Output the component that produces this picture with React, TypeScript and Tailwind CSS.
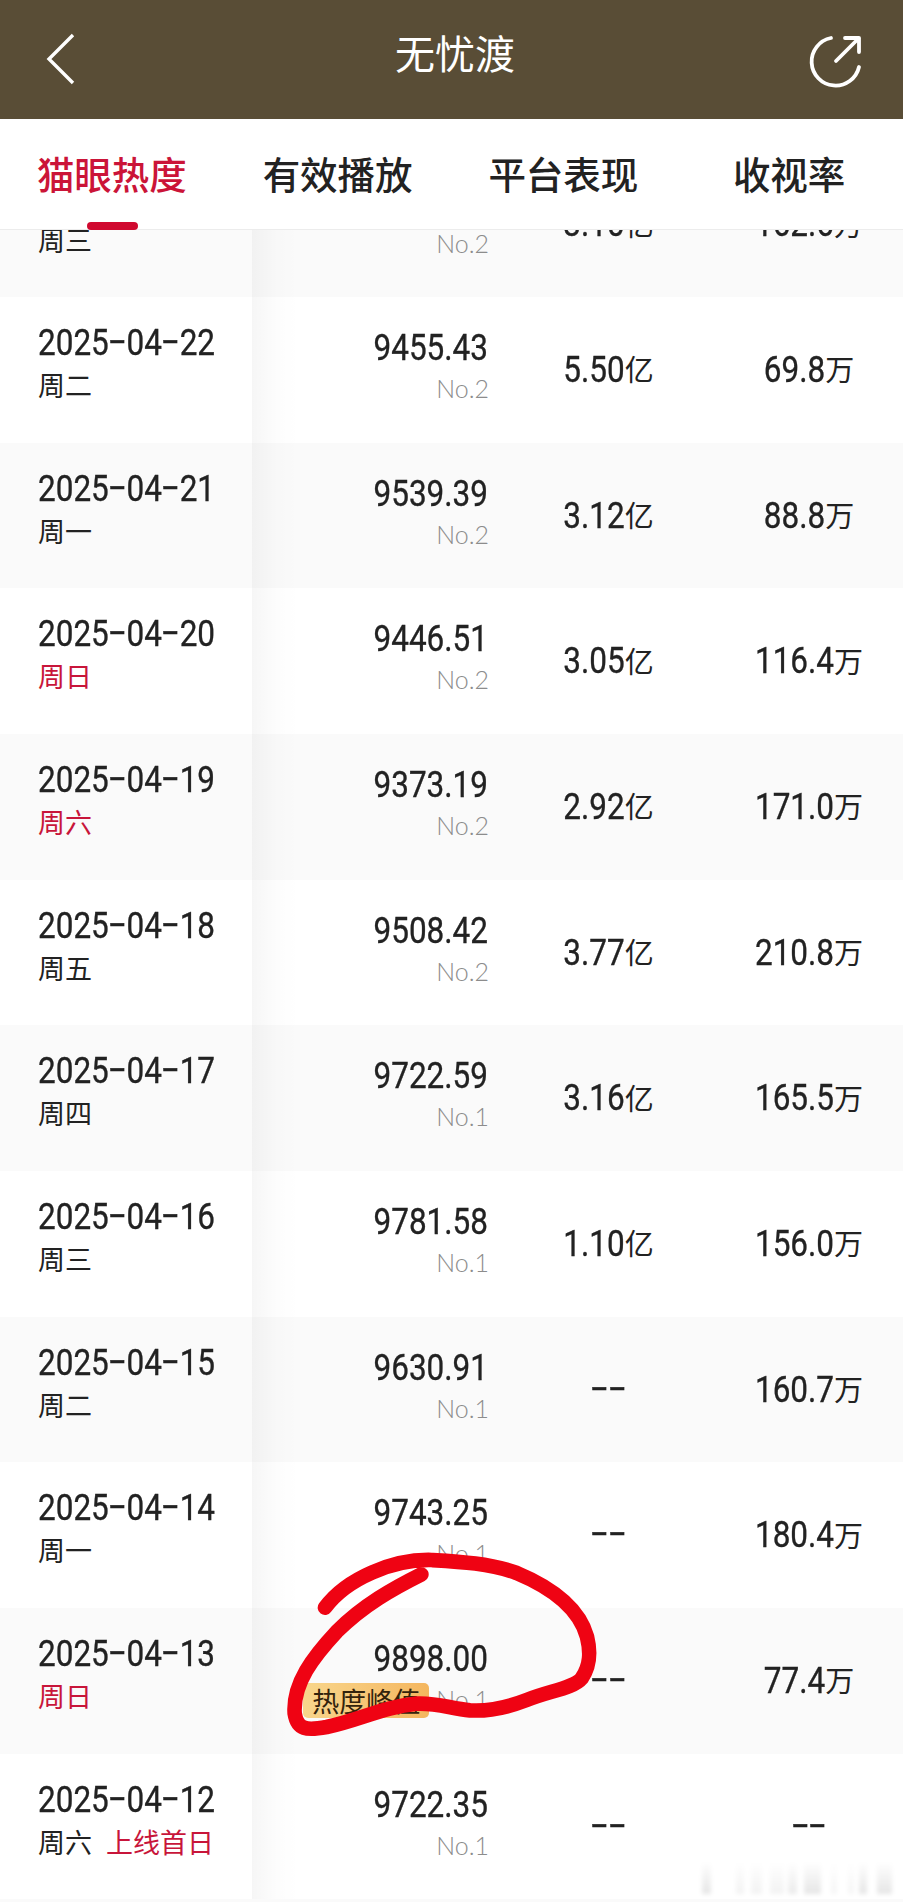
type Row = {
  date: string;
  day: string;
  red?: boolean;
  heat: string;
  rank: string;
  plays: string;
  avg: string;
  note?: string;
  peak?: boolean;
};

const rows: Row[] = [
  { date: "2025-04-23", day: "周三", heat: "9402.16", rank: "No.2", plays: "3.10亿", avg: "162.6万" },
  { date: "2025-04-22", day: "周二", heat: "9455.43", rank: "No.2", plays: "5.50亿", avg: "69.8万" },
  { date: "2025-04-21", day: "周一", heat: "9539.39", rank: "No.2", plays: "3.12亿", avg: "88.8万" },
  { date: "2025-04-20", day: "周日", red: true, heat: "9446.51", rank: "No.2", plays: "3.05亿", avg: "116.4万" },
  { date: "2025-04-19", day: "周六", red: true, heat: "9373.19", rank: "No.2", plays: "2.92亿", avg: "171.0万" },
  { date: "2025-04-18", day: "周五", heat: "9508.42", rank: "No.2", plays: "3.77亿", avg: "210.8万" },
  { date: "2025-04-17", day: "周四", heat: "9722.59", rank: "No.1", plays: "3.16亿", avg: "165.5万" },
  { date: "2025-04-16", day: "周三", heat: "9781.58", rank: "No.1", plays: "1.10亿", avg: "156.0万" },
  { date: "2025-04-15", day: "周二", heat: "9630.91", rank: "No.1", plays: "--", avg: "160.7万" },
  { date: "2025-04-14", day: "周一", heat: "9743.25", rank: "No.1", plays: "--", avg: "180.4万" },
  { date: "2025-04-13", day: "周日", red: true, heat: "9898.00", rank: "No.1", plays: "--", avg: "77.4万", peak: true },
  { date: "2025-04-12", day: "周六", heat: "9722.35", rank: "No.1", plays: "--", avg: "--", note: "上线首日" },
];

const tabs = ["猫眼热度", "有效播放", "平台表现", "收视率"];

/* Tall, narrow figures; hyphens are widened to a full digit cell. */
function Figures({ text }: { text: string }) {
  return (
    <span className="inline-block scale-y-[1.16] font-['Roboto','Noto_Sans_CJK_SC',sans-serif] text-[31.5px] leading-[36px] whitespace-nowrap [-webkit-text-stroke:0.3px]">
      {text.split(/(-)/).map((part, i) =>
        part === "-" ? (
          <span key={i} className="inline-flex w-[17.7px] justify-center">
            <span className="inline-block -translate-y-px scale-x-[1.8]">-</span>
          </span>
        ) : (
          part
        ),
      )}
    </span>
  );
}

function Amount({ text }: { text: string }) {
  const unit = /[亿万]$/.test(text) ? text.slice(-1) : "";
  return (
    <div className="flex items-center justify-center">
      <Figures text={unit ? text.slice(0, -1) : text} />
      {unit && <span className="mb-[3px] text-[29px] leading-[36px]">{unit}</span>}
    </div>
  );
}

function DataRow({ row, striped }: { row: Row; striped: boolean }) {
  return (
    <div className={`flex h-[145.67px] shrink-0 ${striped ? "bg-[#fafafa]" : "bg-white"}`}>
      <div className="flex w-[252px] flex-col pt-[28px] pl-[38px]">
        <Figures text={row.date} />
        <div className="mt-[6px] flex gap-[14px] text-[27px] leading-[36px] whitespace-nowrap">
          <span className={row.red ? "text-[#c8153a]" : ""}>{row.day}</span>
          {row.note && <span className="text-[#c8153a]">{row.note}</span>}
        </div>
      </div>
      <div className="flex w-[236px] flex-col items-end bg-linear-to-r from-black/[0.035] via-black/[0.01] via-10% to-transparent to-20% pt-[33px]">
        <Figures text={row.heat} />
        <div className="mt-[5px] -mr-px flex items-center">
          {row.peak && (
            <span className="mt-px -mb-px mr-[7px] flex h-[35px] w-[126px] items-center justify-center rounded-[5px] bg-linear-to-r from-[#f8d68c] to-[#f4b65e] text-[27px] leading-[35px] text-[#33230c]">
              热度峰值
            </span>
          )}
          <span className="font-['Lato',sans-serif] text-[25px] leading-[35px] font-light text-[#8c8c8c]">{row.rank}</span>
        </div>
      </div>
      <div className="flex w-[241px] items-center justify-center">
        <Amount text={row.plays} />
      </div>
      <div className="flex w-[160px] items-center justify-center">
        <Amount text={row.avg} />
      </div>
    </div>
  );
}

/* Faded smudges in the bottom corner: [x, width, opacity] */
const smudges = [
  [22, 9, 0.1],
  [56, 8, 0.05],
  [71, 11, 0.05],
  [90, 14, 0.05],
  [108, 9, 0.08],
  [124, 17, 0.1],
  [151, 6, 0.04],
  [168, 6, 0.04],
  [179, 8, 0.1],
  [197, 15, 0.1],
];

export default function App() {
  return (
    <div className="relative flex h-[1902px] w-[903px] flex-col overflow-hidden bg-white font-['Noto_Sans_CJK_SC',sans-serif] text-[#222]">
      <header className="flex h-[119px] shrink-0 items-center justify-between bg-[#594d36] px-[40px] text-white">
        <svg className="-mt-[2px]" width="60" height="60" viewBox="0 0 60 60" fill="none" stroke="currentColor" strokeWidth="3.4">
          <path d="M33 6 9 30l24 24" />
        </svg>
        <h1 className="mb-[15px] ml-[7px] text-[40px] leading-[48px]">无忧渡</h1>
        <svg className="-mt-[2px]" width="60" height="60" viewBox="0 0 60 60" fill="none" stroke="currentColor" strokeWidth="3.8" strokeLinecap="round" strokeLinejoin="round">
          <path d="M28 9A24 24 0 1 0 56 38" />
          <path d="M33 32 56 9M42 9H56V23" />
        </svg>
      </header>

      <nav className="grid h-[111px] shrink-0 grid-cols-4 border-b border-[#ececec]">
        {tabs.map((tab, i) => (
          <div key={tab} className={`flex flex-col items-center justify-between pt-[30px] text-[37.5px] leading-[48px] font-medium ${i === 0 ? "text-[#cb1438]" : ""}`}>
            <span className="mr-[2px]">{tab}</span>
            {i === 0 && <span className="-mb-px h-[8px] w-[51px] rounded-full bg-[#d0092f]" />}
          </div>
        ))}
      </nav>

      <main className="flex min-h-0 flex-1 flex-col overflow-hidden">
        <div className="-mt-[78.5px] flex flex-col">
          {rows.map((row, i) => (
            <DataRow key={row.date} row={row} striped={i % 2 === 0} />
          ))}
          <div className="h-[145px] shrink-0 bg-[#fafafa]" />
        </div>
      </main>

      <svg className="absolute top-[1540px] left-[260px]" width="360" height="220" viewBox="0 0 1080 660" fill="none" stroke="#ef0313" strokeWidth="44" strokeLinecap="round" strokeLinejoin="round">
        <path d="M195 203C260 115 400 57 515 60C600 65 690 70 770 99C890 149 960 215 981 290C992 335 992 375 965 415C940 445 870 452 800 480C730 507 680 514 630 511C570 505 530 488 470 491C370 500 300 540 200 561C140 572 112 570 104 520C98 430 160 350 230 275C310 195 400 145 484 103" />
      </svg>

      <svg className="absolute top-[1860px] left-[680px] blur-[2px]" width="223" height="36" viewBox="0 0 223 36">
        <defs>
          <linearGradient id="fade" x1="0" y1="0" x2="0" y2="1">
            <stop offset="0" stopColor="#000" stopOpacity="0" />
            <stop offset="1" stopColor="#000" />
          </linearGradient>
        </defs>
        {smudges.map(([x, w, o]) => (
          <rect key={x} x={x} y="2" width={w} height="32" fill="url(#fade)" opacity={o} />
        ))}
      </svg>
    </div>
  );
}
